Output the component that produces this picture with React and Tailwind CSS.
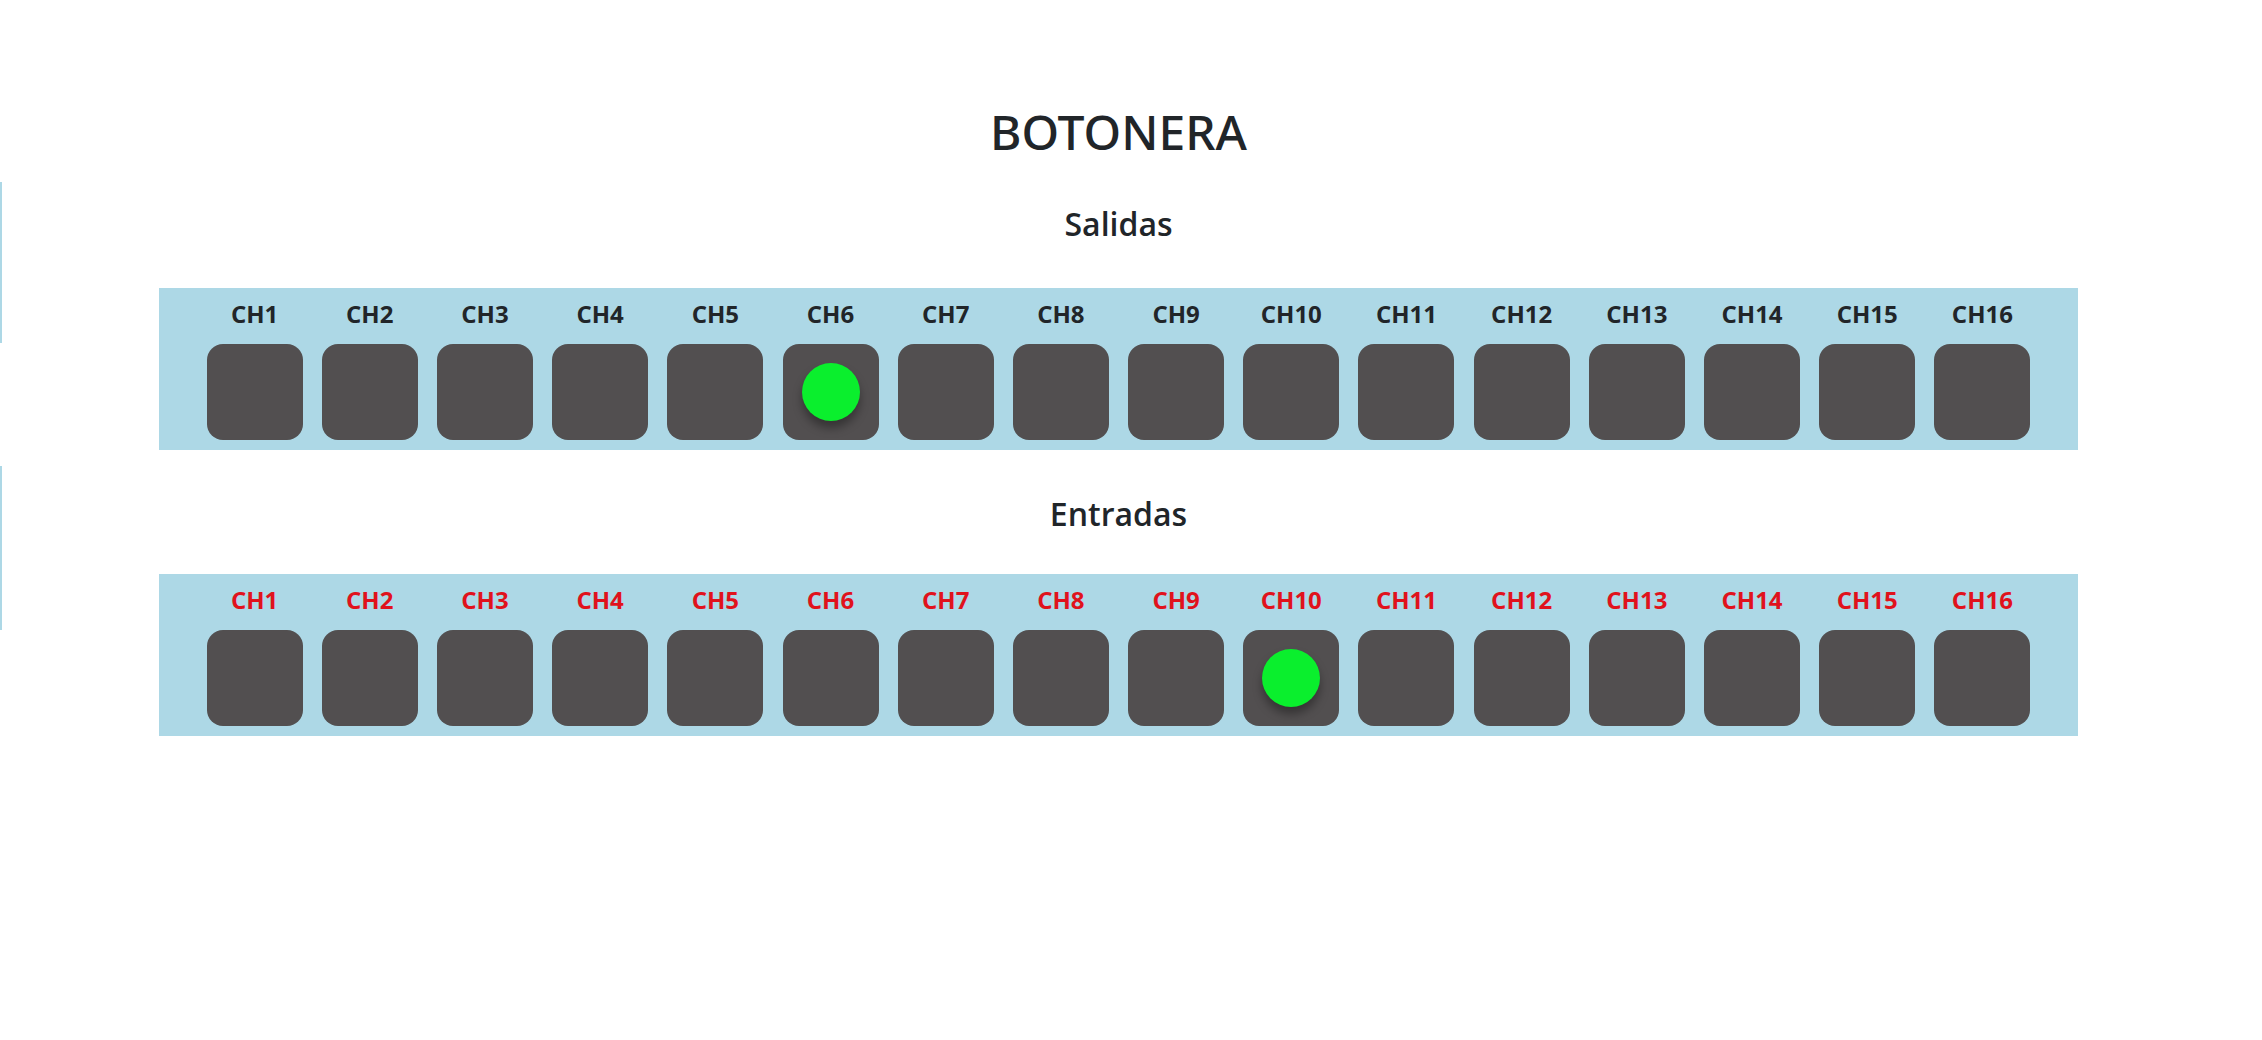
import React from "react";

const channels = Array.from({ length: 16 }, (_, i) => `CH${i + 1}`);

function Panel({ active, red }) {
  return (
    <div className="w-[1919px] bg-[#add8e6] pt-[10px] pb-[10px] flex justify-center gap-[19.2px]">
      {channels.map((ch, i) => (
        <div key={ch} className="flex flex-col items-center w-[96px]">
          <div
            className={`text-[24px] font-bold leading-[32px] h-[36px] ${red ? "text-[#e0121c]" : "text-[#212529]"}`}
          >
            {ch}
          </div>
          <div className="mt-[10px] w-[96px] h-[96px] rounded-[16px] bg-[#524f50] flex items-center justify-center">
            {i === active && (
              <div className="w-[58px] h-[58px] rounded-full bg-[#0aef2d] shadow-[0_7px_10px_rgba(0,0,0,0.35)]" />
            )}
          </div>
        </div>
      ))}
    </div>
  );
}

export default function App() {
  return (
    <div
      className="relative w-[2237px] min-h-[1040px] bg-white flex flex-col items-center"
      style={{ fontFamily: '"Open Sans", "Noto Sans", sans-serif' }}
    >
      <div className="absolute left-0 top-[182px] w-[2px] h-[161px] bg-[#add8e6]" />
      <div className="absolute left-0 top-[466px] w-[2px] h-[164px] bg-[#add8e6]" />
      <h1
        className="mt-[103px] text-[48px] leading-[58px] font-medium text-[#212529]"
        style={{ fontFamily: '"Noto Sans", "Open Sans", sans-serif' }}
      >
        BOTONERA
      </h1>
      <h2 className="mt-[43px] text-[32px] leading-[40px] font-semibold text-[#212529]">Salidas</h2>
      <div className="mt-[44px]">
        <Panel active={5} />
      </div>
      <h2 className="mt-[44px] text-[32px] leading-[40px] font-semibold text-[#212529]">Entradas</h2>
      <div className="mt-[40px]">
        <Panel active={9} red />
      </div>
    </div>
  );
}
